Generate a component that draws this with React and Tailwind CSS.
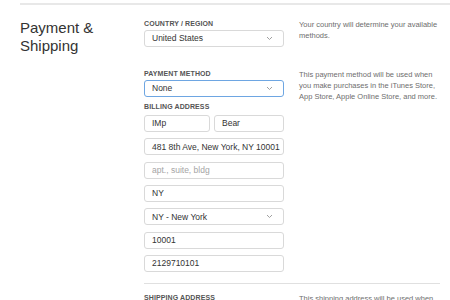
import React from "react";

function Chevron() {
  return (
    <svg width="7" height="5" viewBox="0 0 7 5" className="shrink-0">
      <polyline points="1,1 3.5,3.5 6,1" fill="none" stroke="#a0a0a0" strokeWidth="1" />
    </svg>
  );
}

function Select({ value, focused }) {
  return (
    <div
      className={
        focused
          ? "h-[17px] w-[140px] rounded-[3px] border border-[#6ea6e2] bg-white flex items-center justify-between pl-[7px] pr-[10px]"
          : "h-[17px] w-[140px] rounded-[3px] border border-[#d9d9d9] bg-white flex items-center justify-between pl-[7px] pr-[10px]"
      }
    >
      <span className="text-[8.5px] leading-none text-[#333]">{value}</span>
      <Chevron />
    </div>
  );
}

function Input({ value, placeholder, className = "w-[140px]" }) {
  return (
    <div className={"h-[17px] rounded-[3px] border border-[#d9d9d9] bg-white flex items-center pl-[7px] overflow-hidden whitespace-nowrap " + className}>
      {value ? (
        <span className="text-[8.5px] leading-none text-[#333]">{value}</span>
      ) : (
        <span className="text-[8.5px] leading-none text-[#a5a5a5]">{placeholder}</span>
      )}
    </div>
  );
}

function Label({ children }) {
  return (
    <div className="h-[10px] text-[7px] leading-[10px] font-semibold text-[#555] tracking-[0.1px]">{children}</div>
  );
}

function Note({ children }) {
  return <p className="w-[141px] text-[7.5px] leading-[11px] text-[#6e6e6e]">{children}</p>;
}

export default function App() {
  return (
    <div
      className="w-[450px] h-[300px] overflow-hidden bg-white pl-5 pt-[3px]"
      style={{ fontFamily: '"Liberation Sans", Arial, sans-serif' }}
    >
      <div className="h-[2px] w-[430px] bg-[#e8e8e8]" />
      <div className="flex mt-[14px]">
        <div className="w-[124px] shrink-0">
          <h2 className="text-[15px] leading-[18px] text-[#333]">
            Payment &amp;
            <br />
            Shipping
          </h2>
        </div>
        <div className="flex flex-col w-[296px]">
          {/* country */}
          <div className="flex gap-[15px]">
            <div className="w-[140px] flex flex-col gap-[1px]">
              <Label>COUNTRY / REGION</Label>
              <Select value="United States" />
            </div>
            <Note>Your country will determine your available methods.</Note>
          </div>

          {/* payment */}
          <div className="flex gap-[15px] mt-[22px]">
            <div className="w-[140px] flex flex-col">
              <Label>PAYMENT METHOD</Label>
              <div className="mt-[1px]">
                <Select value="None" focused />
              </div>
              <div className="mt-[5px]">
                <Label>BILLING ADDRESS</Label>
              </div>
              <div className="mt-[3px] flex flex-col gap-[6.33px]">
                <div className="flex gap-[4px]">
                  <Input value="IMp" className="w-[66px]" />
                  <Input value="Bear" className="w-[70px]" />
                </div>
                <Input value="481 8th Ave, New York, NY 10001" />
                <Input placeholder="apt., suite, bldg" />
                <Input value="NY" />
                <Select value="NY - New York" />
                <Input value="10001" />
                <Input value="2129710101" />
              </div>
            </div>
            <Note>
              This payment method will be used when you make purchases in the iTunes Store, App Store, Apple Online Store, and more.
            </Note>
          </div>

          <div className="h-px w-[296px] bg-[#e0e0e0] mt-[11px]" />

          {/* shipping */}
          <div className="flex gap-[15px] mt-[9px]">
            <div className="w-[140px]">
              <Label>SHIPPING ADDRESS</Label>
            </div>
            <Note>This shipping address will be used when you make purchases.</Note>
          </div>
        </div>
      </div>
    </div>
  );
}
